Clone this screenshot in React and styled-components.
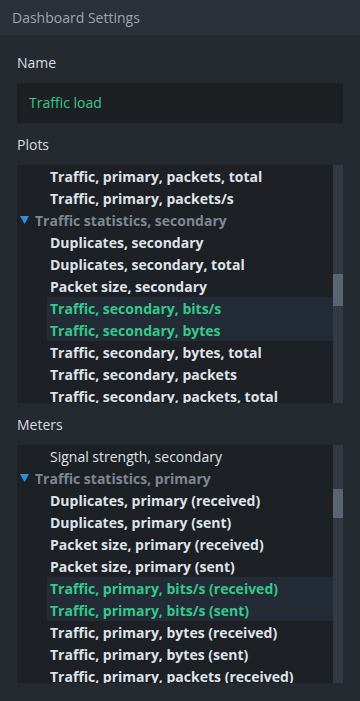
import React from 'react'
import styled, { createGlobalStyle } from 'styled-components'

const GlobalStyle = createGlobalStyle`
  html, body {
    margin: 0;
    padding: 0;
    background: #252930;
  }
  body {
    font-family: "Open Sans", "Noto Sans", sans-serif;
  }
`

const plots = [
  { text: 'Traffic, primary, packets, total' },
  { text: 'Traffic, primary, packets/s' },
  { text: 'Traffic statistics, secondary', group: true },
  { text: 'Duplicates, secondary' },
  { text: 'Duplicates, secondary, total' },
  { text: 'Packet size, secondary' },
  { text: 'Traffic, secondary, bits/s', selected: true },
  { text: 'Traffic, secondary, bytes', selected: true },
  { text: 'Traffic, secondary, bytes, total' },
  { text: 'Traffic, secondary, packets' },
  { text: 'Traffic, secondary, packets, total' },
]

const meters = [
  { text: 'Signal strength, secondary', plain: true },
  { text: 'Traffic statistics, primary', group: true },
  { text: 'Duplicates, primary (received)' },
  { text: 'Duplicates, primary (sent)' },
  { text: 'Packet size, primary (received)' },
  { text: 'Packet size, primary (sent)' },
  { text: 'Traffic, primary, bits/s (received)', selected: true },
  { text: 'Traffic, primary, bits/s (sent)', selected: true },
  { text: 'Traffic, primary, bytes (received)' },
  { text: 'Traffic, primary, bytes (sent)' },
  { text: 'Traffic, primary, packets (received)' },
]

function TreeList({ items, thumbTop, thumbHeight }) {
  return (
    <ListBox>
      <Rows>
        {items.map((item) =>
          item.group ? (
            <GroupRow key={item.text}>
              <Caret viewBox="0 0 9 8">
                <path d="M0 0 H9 L4.5 8 Z" fill="#2f8fdc" />
              </Caret>
              {item.text}
            </GroupRow>
          ) : (
            <ItemRow key={item.text} $selected={item.selected} $plain={item.plain}>
              {item.text}
            </ItemRow>
          )
        )}
      </Rows>
      <Track>
        <Thumb style={{ marginTop: thumbTop, height: thumbHeight }} />
      </Track>
    </ListBox>
  )
}

export default function App() {
  return (
    <>
      <GlobalStyle />
      <Panel>
        <Header>Dashboard Settings</Header>
        <Body>
          <Label>Name</Label>
          <Input>Traffic load</Input>
          <Label>Plots</Label>
          <TreeList items={plots} thumbTop={109} thumbHeight={32} />
          <Label>Meters</Label>
          <TreeList items={meters} thumbTop={44} thumbHeight={29} />
        </Body>
      </Panel>
    </>
  )
}

const Panel = styled.div`
  width: 360px;
  height: 701px;
  background: #252930;
  display: flex;
  flex-direction: column;
  overflow: hidden;
`

const Header = styled.div`
  height: 35px;
  flex-shrink: 0;
  background: #2b303a;
  color: #9ea5af;
  font-size: 14px;
  line-height: 35px;
  padding-left: 12px;
  box-sizing: border-box;
`

const Body = styled.div`
  padding: 6px 17px 0;
  display: flex;
  flex-direction: column;
`

const Label = styled.div`
  color: #d9dde2;
  font-size: 14px;
  line-height: 20px;
  padding: 12px 0 10px;
`

const Input = styled.div`
  height: 40px;
  background: #1d2023;
  color: #34c98a;
  font-size: 14px;
  line-height: 40px;
  padding-left: 12px;
  box-sizing: border-box;
`

const ListBox = styled.div`
  height: 238px;
  background: #1d2024;
  display: flex;
  overflow: hidden;
`

const Rows = styled.div`
  flex: 1;
  display: flex;
  flex-direction: column;
  min-width: 0;
`

const ItemRow = styled.div`
  height: 22px;
  flex-shrink: 0;
  line-height: 23px;
  margin-left: 30px;
  padding-left: 3px;
  font-size: 14px;
  font-weight: ${(p) => (p.$plain ? 400 : 700)};
  color: ${(p) => (p.$selected ? '#34c98a' : '#dfe3ea')};
  background: ${(p) => (p.$selected ? '#222b36' : 'transparent')};
  white-space: nowrap;
`

const GroupRow = styled.div`
  height: 22px;
  flex-shrink: 0;
  display: flex;
  align-items: center;
  gap: 6px;
  padding-left: 3px;
  font-size: 14px;
  font-weight: 700;
  color: #7d8796;
  white-space: nowrap;
`

const Caret = styled.svg`
  width: 9px;
  height: 8px;
  flex-shrink: 0;
`

const Track = styled.div`
  width: 10px;
  flex-shrink: 0;
  background: #333a43;
`

const Thumb = styled.div`
  background: #5a6573;
`
